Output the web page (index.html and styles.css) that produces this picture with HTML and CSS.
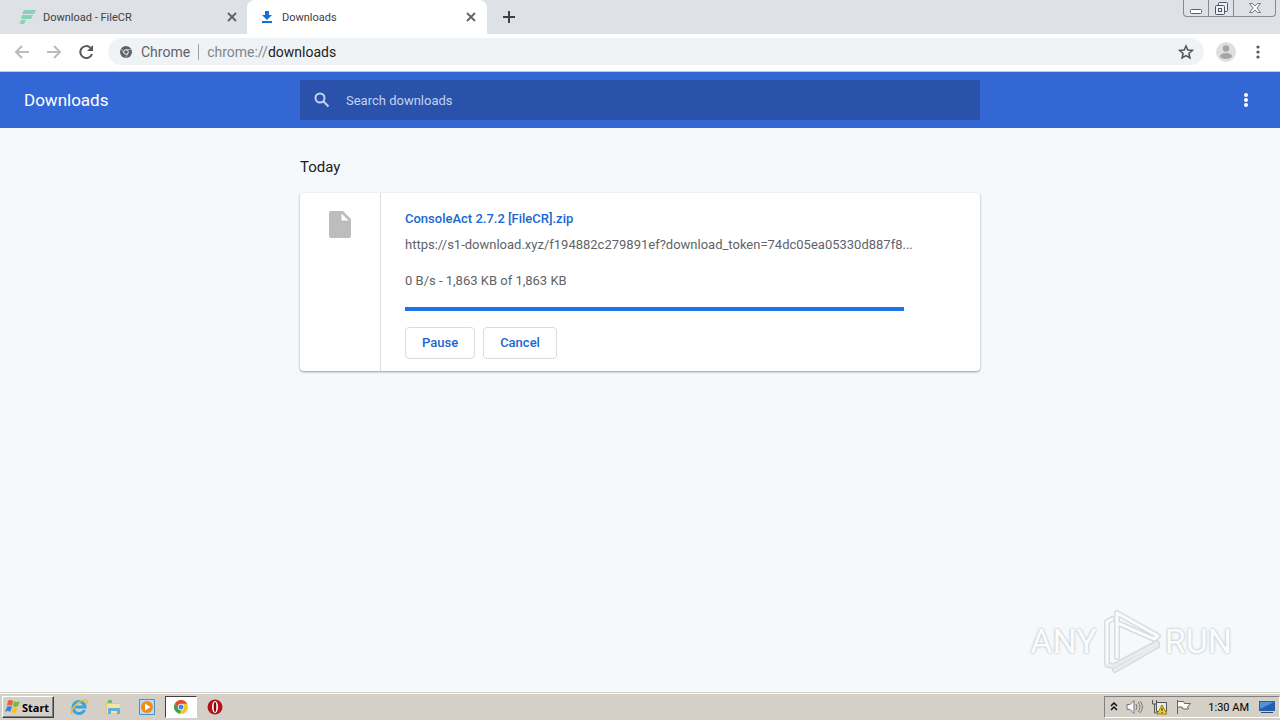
FILE: index.html
```html
<!DOCTYPE html>
<html lang="en">
<head>
  <meta charset="UTF-8" />
  <title>Downloads</title>
  <link rel="stylesheet" href="styles.css">
</head>
<body>
  <header class="tab-strip">
    <div class="tab">
      <svg class="tab-icon" width="16" height="16" viewBox="0 0 16 16" fill="#86d3b8">
        <path d="M4 1h12l-2 4H2zM2 6h11l-2 4H1zM1 11h5l-2 4H0z"/>
      </svg>
      <span class="tab-title">Download - FileCR</span>
      <button class="tab-close" aria-label="Close tab">
        <svg width="10" height="10" viewBox="0 0 10 10" stroke="#5f6368" stroke-width="1.800"><path d="M1 1l8 8M9 1l-8 8"/></svg>
      </button>
    </div>
    <div class="tab active">
      <svg class="tab-icon" width="16" height="16" viewBox="0 0 16 16" fill="#1a6fd6">
        <path d="M6 2h4v4h3l-5 5-5-5h3zM3 12h10v2H3z"/>
      </svg>
      <span class="tab-title">Downloads</span>
      <button class="tab-close" aria-label="Close tab">
        <svg width="10" height="10" viewBox="0 0 10 10" stroke="#5f6368" stroke-width="1.800"><path d="M1 1l8 8M9 1l-8 8"/></svg>
      </button>
    </div>
    <button class="new-tab" aria-label="New tab">
      <svg width="12" height="12" viewBox="0 0 12 12" stroke="#3c4043" stroke-width="2"><path d="M6 0v12M0 6h12"/></svg>
    </button>
    <div class="window-buttons">
      <button aria-label="Minimize">
        <svg width="14" height="14" viewBox="0 0 14 14" fill="#fff" stroke="#596170"><rect x="1.500" y="8.500" width="11" height="4" rx="1"/></svg>
      </button>
      <button aria-label="Restore">
        <svg width="14" height="14" viewBox="0 0 14 14" fill="#eef0f3" stroke="#4d5564"><rect x="4.500" y="1.500" width="9" height="9" rx="1"/><rect x="1.500" y="4.500" width="9" height="9" rx="1"/><rect x="4.500" y="7.500" width="3" height="3"/></svg>
      </button>
      <button class="close" aria-label="Close">
        <svg width="14" height="14" viewBox="0 0 14 14" fill="#fff" stroke="#6f7682"><path d="M1.500 2.500h3L7 5l2.500-2.500h3L9 7l3.500 4.500h-3L7 9l-2.500 2.500h-3L5 7z"/></svg>
      </button>
    </div>
  </header>

  <nav class="nav-bar">
    <button class="nav-button" aria-label="Back">
      <svg width="16" height="16" viewBox="0 0 16 16" fill="none" stroke="#b9bbbe" stroke-width="2"><path d="M15 8H2M8 2L2 8l6 6"/></svg>
    </button>
    <button class="nav-button" aria-label="Forward">
      <svg width="16" height="16" viewBox="0 0 16 16" fill="none" stroke="#b9bbbe" stroke-width="2"><path d="M1 8h13M8 2l6 6-6 6"/></svg>
    </button>
    <button class="nav-button" aria-label="Reload">
      <svg width="16" height="16" viewBox="0 0 16 16" fill="none" stroke="#55585c" stroke-width="2"><path d="M14 10a6 6 0 1 1-1.600-6.300"/><path d="M15 1v6H9z" fill="#55585c" stroke="none"/></svg>
    </button>
    <div class="omnibox">
      <svg width="12" height="12" viewBox="0 0 12 12"><circle cx="6" cy="6" r="6" fill="#5f6368"/><path d="M6 3.500h5M3.800 7.300L1.500 3M8.200 7.300L5.700 11.500" stroke="#c9cccf" stroke-width=".8"/><circle cx="6" cy="6" r="2.300" fill="#5f6368" stroke="#f1f3f4"/></svg>
      <span class="origin">Chrome</span>
      <span class="divider"></span>
      <span class="url">chrome://<b>downloads</b></span>
      <button class="star" aria-label="Bookmark this page">
        <svg width="16" height="16" viewBox="0 0 16 16" fill="none" stroke="#55585c" stroke-width="1.600"><path d="M8 2l1.800 4.100 4.500.4-3.400 3 1 4.400L8 11.600 4.100 13.900l1-4.400-3.400-3 4.500-.4z"/></svg>
      </button>
    </div>
    <button class="profile" aria-label="Profile">
      <svg width="20" height="20" viewBox="0 0 20 20"><circle cx="10" cy="10" r="10" fill="#dedfe0"/><circle cx="10" cy="6.500" r="3.200" fill="#a3a5a7"/><ellipse cx="10" cy="14" rx="6" ry="3" fill="#a3a5a7"/></svg>
    </button>
    <button class="nav-button menu" aria-label="Menu">
      <svg width="4" height="14" viewBox="0 0 4 14" fill="#55585c"><circle cx="2" cy="2" r="1.600"/><circle cx="2" cy="7" r="1.600"/><circle cx="2" cy="12" r="1.600"/></svg>
    </button>
  </nav>

  <div class="toolbar">
    <h1>Downloads</h1>
    <label class="search">
      <svg width="16" height="16" viewBox="0 0 16 16" fill="none" stroke="#c3d2ef" stroke-width="2"><circle cx="6" cy="6" r="4.500"/><path d="M9.500 9.500l5 5"/></svg>
      <input type="text" placeholder="Search downloads" aria-label="Search downloads">
    </label>
    <button class="more" aria-label="More actions">
      <svg width="4" height="14" viewBox="0 0 4 14" fill="#fff"><circle cx="2" cy="2" r="2"/><circle cx="2" cy="7" r="2"/><circle cx="2" cy="12" r="2"/></svg>
    </button>
  </div>

  <main class="content">
    <div class="list">
      <h2>Today</h2>
      <div class="card">
        <div class="file-icon">
          <svg width="22" height="27" viewBox="0 0 22 27"><path d="M2 0h12l8 8v17q0 2-2 2H2q-2 0-2-2V2q0-2 2-2z" fill="#bdbdbd"/><path d="M12.500 2.500v7h7z" fill="#fff"/></svg>
        </div>
        <div class="details">
          <a class="file-name" href="#">ConsoleAct 2.7.2 [FileCR].zip</a>
          <a class="file-url" href="#">https://s1-download.xyz/f194882c279891ef?download_token=74dc05ea05330d887f8...</a>
          <p class="status">0 B/s - 1,863 KB of 1,863 KB</p>
          <div class="progress"></div>
          <div class="actions">
            <button>Pause</button>
            <button>Cancel</button>
          </div>
        </div>
      </div>
    </div>
    <div class="watermark">
      <span>ANY</span>
      <svg width="62" height="66" viewBox="0 0 62 66" fill="none" stroke-linejoin="round" stroke-linecap="round">
        <g stroke="#d9dcde" stroke-width="6">
          <path d="M12 11l-5 3v43l7 1L57 35M17 5v44M17 5l41 23-4 3-34-15M15 62l42-24"/>
        </g>
        <g stroke="#fafbfc" stroke-width="3">
          <path d="M12 11l-5 3v43M17 5v44M17 5l41 23-4 3-34-15"/>
        </g>
        <path d="M7 57l7 1L57 35M15 62l42-24" stroke="#e9ebed" stroke-width="3"/>
      </svg>
      <span>RUN</span>
    </div>
  </main>

  <footer class="taskbar">
    <button class="start">
      <svg width="16" height="16" viewBox="0 0 16 16"><path d="M3 2q3-2 5 0L7 7Q4 5 2 7z" fill="#e8602c"/><path d="M9 2q3 2 6 0l-2 5q-3 2-5 0z" fill="#77b843"/><path d="M2 8q3-2 5 0l-2 5q-2-2-5 0z" fill="#3b83d8"/><path d="M8 8q3 2 5 0l-2 5q-2 2-5 0z" fill="#f6c431"/></svg>
      Start
    </button>
    <div class="quick-launch">
      <button aria-label="Internet Explorer">
        <svg width="18" height="18" viewBox="0 0 18 18" fill="none"><path d="M14.500 12A6 6 0 1 1 15 9H5" stroke="#39a5df" stroke-width="3"/><path d="M2 16C-1 12 10 1 16 2q2 1 0 4" stroke="#edba38" stroke-width="1.500"/></svg>
      </button>
      <button aria-label="Explorer">
        <svg width="18" height="18" viewBox="0 0 18 18"><path d="M2 3h5l1 2h7v10H2z" fill="#e8ca62"/><path d="M4 2h4v3H4z" fill="#70b979"/><path d="M3 6h13v9H3z" fill="#f6e5a0"/><path d="M4 10h12v6h-3v-3H7v3H4z" fill="#61b1df"/></svg>
      </button>
      <button aria-label="Media Player">
        <svg width="18" height="18" viewBox="0 0 18 18"><path d="M1.500 1.500h15v15h-15z" fill="#bcdaf0" stroke="#4b8fcb"/><circle cx="9" cy="9" r="6" fill="#f28a1c"/><path d="M7 5.500v7L12.500 9z" fill="#fff"/></svg>
      </button>
      <button class="pressed" aria-label="Chrome">
        <svg width="14" height="14" viewBox="0 0 14 14"><circle cx="7" cy="7" r="7" fill="#f5c52d"/><path d="M1 3.500A7 7 0 0 1 13.100 3.700H7L4 8.700z" fill="#de4938"/><path d="M1 3.500l3 5.200 3 1.800L5.500 13.800A7 7 0 0 1 1 3.500z" fill="#35a154"/><circle cx="7" cy="7" r="3.200" fill="#fff"/><circle cx="7" cy="7" r="2.500" fill="#4385e8"/></svg>
      </button>
      <button aria-label="Opera">
        <svg width="16" height="16" viewBox="0 0 16 16"><circle cx="8" cy="8" r="7.500" fill="#b31318"/><ellipse cx="8" cy="8" rx="3" ry="6" fill="#fff"/><ellipse cx="8" cy="8" rx="1.300" ry="5" fill="#84090d"/></svg>
      </button>
    </div>
    <div class="tray">
      <svg width="8" height="10" viewBox="0 0 8 10" fill="none" stroke="#111" stroke-width="1.500"><path d="M1 4l3-3 3 3M1 8l3-3 3 3"/></svg>
      <svg width="17" height="16" viewBox="0 0 17 16" fill="none" stroke="#777"><path d="M1 5.500h3l4-4v13l-4-4H1z" fill="#f7f7f7"/><path d="M10 5q2 3 0 6M12 3q4 5 0 10M14 2q5 6 0 12"/></svg>
      <svg width="16" height="16" viewBox="0 0 16 16"><path d="M5.500 3.500h10v9h-10z" fill="#e6e9ea" stroke="#555"/><path d="M1.500 1v4h4V1M3.500 5v9h4" fill="none" stroke="#555"/><path d="M11 6l5 9H6z" fill="#f7cf23" stroke="#9a7c16"/><path d="M11 9v3M11 13v1" stroke="#222"/></svg>
      <svg width="17" height="16" viewBox="0 0 17 16" fill="#fafafa" stroke="#666"><path d="M2.500 1v14M2.500 2.500h6l1 2h6l-3 3.500 1 2H8l-1-2H2.500z"/></svg>
      <time>1:30 AM</time>
      <svg width="16" height="14" viewBox="0 0 16 14"><path d="M0 1h16v10H0z" fill="#2460ad"/><path d="M1 2h14L1 9z" fill="#5293d6"/><path d="M2 12h12v1H2z" fill="#304a72"/></svg>
    </div>
  </footer>
</body>
</html>
```

FILE: styles.css
```css
* {
  box-sizing: border-box;
}

body {
  margin: 0;
  min-height: 100vh;
  display: flex;
  flex-direction: column;
  background-color: #f6f9fc;
  font-family: Roboto, sans-serif;
  font-size: 13px;
}

button {
  display: flex;
  align-items: center;
  justify-content: center;
  padding: 0;
  border: none;
  background: none;
  font: inherit;
  cursor: pointer;
}

svg {
  flex-shrink: 0;
}

/* browser chrome */
.tab-strip {
  display: flex;
  height: 34px;
  background-color: #dee1e6;
  font-size: 11px;
  color: #3c4043;
}

.tab {
  display: flex;
  align-items: center;
  width: 247px;
  padding: 0 9px 0 20px;
}

.tab.active {
  width: 240px;
  padding: 0 10px 0 12px;
  background-color: #fff;
  border-radius: 8px 8px 0 0;
}

.tab-title {
  flex: 1;
  margin-left: 7px;
}

.tab-close {
  width: 12px;
  height: 16px;
}

.new-tab {
  width: 44px;
}

.window-buttons {
  display: flex;
  height: 17px;
  margin-left: auto;
  margin-right: 4px;
  border: 1px solid #858b96;
  border-top: none;
  border-radius: 0 0 4px 4px;
}

.window-buttons button {
  width: 25px;
  border-right: 1px solid #858b96;
}

.window-buttons .close {
  width: 41px;
  border-right: none;
}

.nav-bar {
  display: flex;
  align-items: center;
  height: 38px;
  padding: 0 6px 2px;
  background-color: #fff;
  border-bottom: 1px solid #c5cbd6;
}

.nav-button {
  width: 32px;
  height: 28px;
}

.omnibox {
  flex: 1;
  display: flex;
  align-items: center;
  height: 27px;
  margin-left: 6px;
  padding: 0 10px 0 12px;
  border-radius: 14px;
  background-color: #f0f3f5;
  font-size: 14px;
  color: #5f6368;
}

.origin {
  margin-left: 9px;
}

.divider {
  width: 1px;
  height: 16px;
  margin: 0 8px;
  background-color: #9da1a6;
}

.url {
  color: #80868b;
}

.url b {
  font-weight: normal;
  color: #202124;
}

.star {
  margin-left: auto;
}

.profile {
  margin-left: 12px;
  margin-right: 6px;
}

/* page toolbar */
.toolbar {
  display: grid;
  grid-template-columns: 1fr minmax(0, 680px) 1fr;
  align-items: center;
  height: 56px;
  background-color: #3367d6;
  color: #fff;
}

h1 {
  margin: 0;
  padding-left: 24px;
  font-size: 17px;
  font-weight: normal;
}

.search {
  display: flex;
  align-items: center;
  height: 40px;
  padding: 0 14px;
  background-color: #2a52ab;
}

.search input {
  flex: 1;
  margin-left: 16px;
  padding: 0;
  border: none;
  outline: none;
  background: none;
  font: inherit;
  color: #fff;
}

.search input::placeholder {
  color: #c3d2ef;
}

.more {
  justify-self: end;
  width: 20px;
  height: 32px;
  margin-right: 24px;
}

/* download list */
.content {
  position: relative;
  flex: 1;
}

.list {
  max-width: 680px;
  margin: 0 auto;
  padding-top: 29px;
}

h2 {
  margin: 0 0 16px;
  font-size: 15px;
  line-height: 20px;
  font-weight: normal;
  color: #202124;
}

.card {
  display: flex;
  border-radius: 4px;
  background-color: #fff;
  box-shadow: 0 1px 2px rgba(60, 64, 67, 0.4), 0 1px 3px rgba(60, 64, 67, 0.15);
}

.file-icon {
  width: 81px;
  padding: 18px 0 0 29px;
  border-right: 1px solid #dadce0;
}

.details {
  flex: 1;
  min-width: 0;
  padding: 16px 56px 12px 24px;
  line-height: 20px;
}

.details a {
  display: block;
  overflow: hidden;
  text-overflow: ellipsis;
  white-space: nowrap;
  text-decoration: none;
}

.file-name {
  font-weight: 500;
  color: #1967d2;
}

.details .file-url {
  margin-top: 6px;
  color: #5f6368;
}

.status {
  margin: 16px 0;
  color: #5f6368;
}

.progress {
  height: 4px;
  margin-right: 20px;
  background-color: #1a73e8;
}

.actions {
  display: flex;
  gap: 8px;
  margin-top: 16px;
}

.actions button {
  height: 32px;
  padding: 0 16px;
  border: 1px solid #dadce0;
  border-radius: 4px;
  font-weight: 500;
  color: #1967d2;
}

.watermark {
  position: absolute;
  right: 48px;
  bottom: 18px;
  display: flex;
  align-items: center;
  gap: 3px;
  font-size: 34px;
  color: #fbfcfd;
  text-shadow: 0 0 2px #bfc3c6, 0 0 3px #c9cdd0;
}

/* windows taskbar */
.taskbar {
  display: flex;
  align-items: center;
  height: 28px;
  padding: 1px 0 0 2px;
  border-top: 1px solid #d4d0c8;
  box-shadow: inset 0 1px #fff;
  background-color: #d4d0c8;
  font-size: 11px;
}

.start {
  gap: 1px;
  height: 22px;
  padding: 0 4px 0 2px;
  border: 1px solid;
  border-color: #fff #404040 #404040 #fff;
  box-shadow: inset -1px -1px #808080;
  font-family: "Noto Sans", sans-serif;
  font-weight: bold;
}

.quick-launch {
  display: flex;
  margin-left: 8px;
}

.quick-launch button {
  width: 34px;
  height: 22px;
}

.quick-launch .pressed {
  width: 32px;
  margin: 0 1px;
  border: 1px solid;
  border-color: #404040 #fff #fff #404040;
  background-color: #fff;
}

.tray {
  display: flex;
  align-items: center;
  gap: 8px;
  height: 22px;
  margin-left: auto;
  padding: 0 4px 0 5px;
  border: 1px solid;
  border-color: #808080 #fff #fff #808080;
}

.tray time {
  margin: 0 2px 0 8px;
}
```
